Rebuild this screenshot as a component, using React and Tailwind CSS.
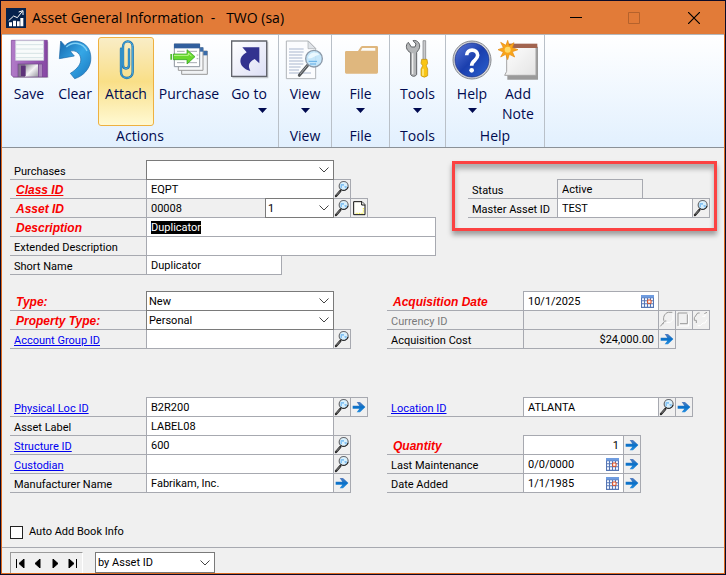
import React, { useEffect, useRef } from 'react'

const LINE = 'border-[#a7a9b0]'

function Magnifier() {
  return (
    <svg viewBox="0 0 48 54" className="w-4 h-[18px]">
      <path d="M19 33L6 48" stroke="#222" strokeWidth="7" strokeLinecap="round" />
      <path d="M18 34L7 46" stroke="#aaa" strokeWidth="2.5" />
      <circle cx="29" cy="18" r="13.5" fill="#d9f0fc" stroke="#66686c" strokeWidth="3.5" />
      <path d="M20 12h10v5h-6v8h-5zM31 18h7v7h-5z" fill="#86c4f4" />
      <path d="M19 27a13.500 13.500 0 0 0 23-6" fill="none" stroke="#222" strokeWidth="3" />
    </svg>
  )
}

function BlueArrow() {
  return (
    <svg viewBox="0 0 48 54" className="w-4 h-[18px]">
      <defs>
        <linearGradient id="blueArrow" x1="0" y1="0" x2="0" y2="1">
          <stop offset="0" stopColor="#5a7fc0" />
          <stop offset="0.500" stopColor="#0870c8" />
          <stop offset="1" stopColor="#2b90e0" />
        </linearGradient>
      </defs>
      <path d="M5 23h20l-8-11h10l16 15-16 16H17l8-11H5z" fill="url(#blueArrow)" />
    </svg>
  )
}

function NoteIcon() {
  return (
    <svg viewBox="0 0 48 54" className="w-4 h-[18px]">
      <path d="M8 8h25l9 9v30H8z" fill="#fffffa" stroke="#111" strokeWidth="3" />
      <path d="M32 8v10h10" fill="#fff" stroke="#111" strokeWidth="3" />
      <path d="M14 43h24M37 27v14" stroke="#f5ee30" strokeWidth="3" strokeDasharray="3 2" />
    </svg>
  )
}

function CalendarIcon() {
  return (
    <svg viewBox="0 0 39 39" className="size-[13px] shrink-0">
      <path d="M0 0h39v39H0z" fill="#5676b4" />
      <path d="M0 0h39v8H0z" fill="#6f9ce0" />
      <path d="M3 10h6v6H3zM12 10h6v6h-6zM21 10h6v6h-6zM30 10h6v6h-6zM3 19h6v6H3zM12 19h6v6h-6zM30 19h6v6h-6zM3 28h6v7H3zM12 28h6v7h-6zM21 28h6v7h-6zM30 28h6v7h-6z" fill="#f2f7ff" />
      <path d="M20 15h10v10H20z" fill="#fff" stroke="#e04a18" strokeWidth="3" />
    </svg>
  )
}

function GhostIcon({ kind }) {
  const d = {
    lookup: 'M4 46L16 32C10 22 16 6 28 4h12M10 38h4M18 30h4',
    note: 'M6 6h28M6 6v39M12 38h22V10',
    expand: 'M4 20L14 6h6M4 20v8h6v8M34 8l8-4',
  }[kind]
  const hi = {
    lookup: 'M22 34h12l8-8V8',
    note: 'M38 8v37H8',
    expand: 'M14 44h8l8-8h6l6-10M28 16h8v-8',
  }[kind]
  return (
    <svg viewBox="0 0 48 54" className="w-4 h-[18px]" fill="none" strokeWidth="3">
      <path d={hi} stroke="#fff" />
      <path d={d} stroke="#9a9a9a" />
    </svg>
  )
}

const ICONS = {
  lookup: ['Lookup', <Magnifier />],
  go: ['Open', <BlueArrow />],
  note: ['Note', <NoteIcon />],
  lookupOff: ['Lookup currency', <GhostIcon kind="lookup" />],
  noteOff: ['Currency note', <GhostIcon kind="note" />],
  expandOff: ['Currency expansion', <GhostIcon kind="expand" />],
}

function Cell({ icon }) {
  const [name, drawing] = ICONS[icon]
  return (
    <button
      type="button"
      aria-label={name}
      disabled={icon.endsWith('Off')}
      className={`w-[17px] h-5 -mt-px shrink-0 border border-l-0 ${LINE}`}
    >
      {drawing}
    </button>
  )
}

function Row({ id, label, kind, labelWidth = 'w-[136px]', cells = [], children }) {
  const text = {
    link: 'pl-1 text-[#0000f0]',
    required: "pl-1.5 text-[#f80000] font-['Liberation_Sans',sans-serif] text-[12px] font-bold italic",
    off: 'pl-1 text-[#7a7a7a]',
  }[kind] || 'pl-1'
  return (
    <div className="flex h-[19px]">
      <label htmlFor={id} className={`${labelWidth} shrink-0 border-b pt-[3px] leading-[15px] whitespace-nowrap ${LINE} ${text}`}>
        {kind === 'link' || id === 'class-id' ? <a href="#" className="underline">{label}</a> : label}
      </label>
      {children}
      {cells.map((c) => <Cell key={c} icon={c} />)}
    </div>
  )
}

function Field({ id, value = '', width = 'w-[188px]', gray, right, calendar, inputRef, noRight }) {
  return (
    <div className={`${width} ${gray ? 'bg-[#f0f0f0]' : 'bg-white'} ${noRight ? 'border-r-0' : ''} h-5 -mt-px shrink-0 flex items-center border px-1 ${LINE}`}>
      <input
        ref={inputRef}
        id={id}
        type="text"
        defaultValue={value}
        readOnly={gray}
        className={`w-full min-w-0 h-[13px] outline-none leading-[13px] selection:bg-[#000000fe] selection:text-white ${right ? 'text-right' : ''}`}
      />
      {calendar && <button type="button" aria-label="Calendar">{<CalendarIcon />}</button>}
    </div>
  )
}

function Select({ id, options, width = 'w-[188px]', height = 'h-5 -mt-px', label }) {
  return (
    <div className={`${width} ${height} relative z-10 shrink-0 grid items-center bg-white border border-[#7a7a7a]`}>
      <select id={id} aria-label={label} className="col-start-1 row-start-1 w-full h-[18px] pl-0.5 pt-px leading-4 appearance-none outline-none">
        {options.map((o) => <option key={o}>{o}</option>)}
      </select>
      <svg viewBox="0 0 10 6" className="col-start-1 row-start-1 justify-self-end mr-1 w-2.5 h-1.5 pointer-events-none" fill="none" stroke="#444">
        <path d="M0.500 0.500L5 5L9.500 0.500" />
      </svg>
    </div>
  )
}

function SaveIcon() {
  return (
    <svg viewBox="27 120 114 114" className="size-[38px] overflow-visible">
      <defs>
        <linearGradient id="purple" x1="0" y1="0" x2="1" y2="0">
          <stop offset="0" stopColor="#b17bc8" />
          <stop offset="1" stopColor="#8747a4" />
        </linearGradient>
        <linearGradient id="shutter" x1="0" y1="0" x2="1" y2="1">
          <stop offset="0" stopColor="#8c8c94" />
          <stop offset="0.500" stopColor="#f4f4f6" />
          <stop offset="1" stopColor="#9a9aa2" />
        </linearGradient>
      </defs>
      <path d="M34 125h108v109H36z" fill="#000" opacity="0.200" />
      <path d="M31 121h108v110H37l-6-6z" fill="url(#purple)" stroke="#75408f" strokeWidth="2" />
      <path d="M44 122h84v59H44z" fill="#f8fbfb" stroke="#cfd8dc" strokeWidth="2" />
      <path d="M45 134h82M45 147h82M45 160h82M45 173h82" stroke="#d5e2e4" strokeWidth="3" />
      <path d="M50 191h74v40H50z" fill="#6b4585" />
      <path d="M72 193h39v37H72z" fill="url(#shutter)" />
      <path d="M52 193h20v37H52z" fill="#85758f" />
      <path d="M60 197h14v31H60z" fill="#5c3279" />
      <path d="M113 193h10v37h-10z" fill="#a985bb" />
    </svg>
  )
}

function ClearIcon() {
  return (
    <svg viewBox="165 120 114 114" className="size-[38px] overflow-visible">
      <defs>
        <linearGradient id="undo" x1="0" y1="0" x2="1" y2="1">
          <stop offset="0" stopColor="#1668ae" />
          <stop offset="0.500" stopColor="#35a7e6" />
          <stop offset="1" stopColor="#1b78c0" />
        </linearGradient>
      </defs>
      <path
        d="M179 123L192 137C204 124 222 120 238 126C262 134 272 157 269 183C266 207 246 229 221 236L208 220C229 207 242 191 239 174C236 157 220 149 208 154L220 168L175 176z"
        fill="url(#undo)"
        stroke="#1966a6"
        strokeWidth="2"
      />
      <path d="M196 141C215 123 246 127 258 153" fill="none" stroke="#7fd0f6" strokeWidth="4" />
    </svg>
  )
}

function AttachIcon() {
  return (
    <svg viewBox="321 120 114 114" className="size-[38px] overflow-visible" fill="none" strokeLinecap="round">
      <path d="M363 146v70c0 24 35 24 35 0v-76c0-21-29-21-29 0v55c0 14 18 14 18 0v-47" stroke="#1c6ea8" strokeWidth="7" />
      <path d="M363 146v70c0 24 35 24 35 0v-76c0-21-29-21-29 0v55c0 14 18 14 18 0v-47" stroke="#4bb0e4" strokeWidth="3" />
    </svg>
  )
}

function PurchaseIcon() {
  return (
    <svg viewBox="507 120 114 114" className="size-[38px] overflow-visible">
      <path d="M542 153h77v70h-77z" fill="#f0f2f4" stroke="#999" strokeWidth="3" />
      <path d="M541 153h78v13h-78z" fill="#3a6caa" />
      <path d="M532 143h74v68h-74z" fill="#f7f8f9" stroke="#999" strokeWidth="3" />
      <path d="M531 142h76v13h-76z" fill="#3a6caa" />
      <path d="M520 132h76v68h-76z" fill="#fff" stroke="#8d959e" strokeWidth="3" />
      <path d="M519 131h78v14h-78z" fill="#315f9d" />
      <path d="M528 154h23M560 154h28M528 188h23M560 188h28M587 165h5M587 176h5" stroke="#a8acb2" strokeWidth="3" />
      <path d="M517 162h41v-13l24 21-24 22v-13h-41z" fill="#68d92e" stroke="#279a1d" strokeWidth="2" />
      <path d="M508 162h5v17h-5z" fill="#4dbb2c" />
      <path d="M519 166h43v-7l10 10" fill="none" stroke="#bff796" strokeWidth="3" />
    </svg>
  )
}

function GotoIcon() {
  return (
    <svg viewBox="687 120 114 114" className="size-[38px] overflow-visible">
      <defs>
        <linearGradient id="goto" x1="0" y1="0" x2="1" y2="1">
          <stop offset="0" stopColor="#fff" />
          <stop offset="1" stopColor="#dcdff5" />
        </linearGradient>
      </defs>
      <path d="M694 125h108v110H694z" fill="#000" opacity="0.200" />
      <path d="M692 123h105v106H692z" fill="url(#goto)" stroke="#62646c" strokeWidth="4" />
      <path d="M724 142h51v48l-14-13c-18 9-21 20-13 36-31-8-43-38-11-56z" fill="#33338f" />
    </svg>
  )
}

function ViewIcon() {
  return (
    <svg viewBox="48 120 114 114" className="size-[38px] overflow-visible">
      <path d="M49 123h66l22 22v91H49z" fill="#fbfcfe" stroke="#b0b4b8" strokeWidth="3" />
      <path d="M114 123l23 23h-23z" fill="#dfe3e8" stroke="#a8acb0" strokeWidth="2" />
      <path d="M57 147h44M57 156h44M57 165h40M57 174h40M57 183h43M57 192h43M57 201h35M57 210h30M57 219h66" stroke="#a9b6ce" strokeWidth="3" />
      <path d="M113 196L88 226" stroke="#55585c" strokeWidth="9" strokeLinecap="round" />
      <path d="M112 196L90 222" stroke="#a4a8ac" strokeWidth="3" />
      <circle cx="132" cy="176" r="25" fill="#bfe3fa" fillOpacity="0.900" stroke="#8c99a8" strokeWidth="4" />
      <path d="M114 175c3-18 25-23 34-10-10-1-20 12-34 10z" fill="#eaf8ff" />
      <path d="M116 184h25M120 192h18" stroke="#5fabe5" strokeWidth="3" />
    </svg>
  )
}

function FileIcon() {
  return (
    <svg viewBox="214 120 114 114" className="size-[38px] overflow-visible">
      <path d="M223 157q0-4 4-4h35l8-12q2-3 6-3h42q4 0 4 4v75q0 4-4 4h-91q-4 0-4-4z" fill="#dfb77e" />
      <path d="M270 152l5-8h39v8z" fill="#fbfbf8" />
    </svg>
  )
}

function ToolsIcon() {
  return (
    <svg viewBox="385 120 114 114" className="size-[38px] overflow-visible">
      <path d="M413 127l9 14h11l3-9-9-10c14-4 26 12 17 27l-6 8v67q-9 10-18 0v-66c-14-6-17-23-7-31z" fill="#b4b6b8" stroke="#5f6265" strokeWidth="3" />
      <path d="M426 160v62" stroke="#eee" strokeWidth="4" />
      <path d="M457 122h8v57h-8z" fill="#c9cacc" stroke="#77797c" strokeWidth="2" />
      <path d="M453 178h16l2 12-4 7 4 10v20q-10 9-20 0v-20l5-10-5-7z" fill="#f9c514" stroke="#b98a0c" strokeWidth="2" />
      <path d="M457 206v21" stroke="#fff09a" strokeWidth="4" />
    </svg>
  )
}

function HelpIcon() {
  return (
    <svg viewBox="549 120 114 114" className="size-[38px] overflow-visible">
      <defs>
        <linearGradient id="help" x1="0" y1="0" x2="1" y2="1">
          <stop offset="0" stopColor="#5b79d8" />
          <stop offset="0.500" stopColor="#1b3fae" />
          <stop offset="1" stopColor="#2a62d0" />
        </linearGradient>
      </defs>
      <circle cx="606" cy="180" r="57" fill="#d4d6da" stroke="#85888e" strokeWidth="3" />
      <circle cx="606" cy="180" r="51" fill="url(#help)" stroke="#1c2f80" strokeWidth="2" />
      <path d="M590 166c0-22 33-20 33 0 0 15-18 15-18 31" fill="none" stroke="#fff" strokeWidth="11" />
      <circle cx="605" cy="211" r="7" fill="#fff" />
    </svg>
  )
}

function AddNoteIcon() {
  return (
    <svg viewBox="687 120 114 114" className="size-[38px] overflow-visible">
      <defs>
        <linearGradient id="paper" x1="0" y1="0" x2="1" y2="1">
          <stop offset="0" stopColor="#fff" />
          <stop offset="1" stopColor="#e4e4e4" />
        </linearGradient>
      </defs>
      <path d="M712 140h92v99h-92z" fill="#9a9a9a" />
      <path d="M710 134h88v92h-94l6-12z" fill="url(#paper)" stroke="#a5a5a5" strokeWidth="3" />
      <path d="M709 131h93v13h-93z" fill="#a1644f" />
      <path d="M713 121l5 16 14-9-5 15 17 6-17 6 7 16-16-8-5 16-6-16-15 8 8-15-16-7 16-6-8-16 16 9z" fill="#f9a51a" stroke="#e58b10" strokeWidth="2" />
      <circle cx="713" cy="149" r="9" fill="#ffd966" />
    </svg>
  )
}

function RibbonButton({ icon, label, width, menu, menuEnd, active }) {
  return (
    <button
      type="button"
      className={`${width} h-[89px] pt-0.5 flex flex-col items-center border rounded-[3px] ${active ? 'border-[#eeb140] bg-linear-to-b from-[#f9edc6] via-[#f9df87] via-50% to-[#fff9d2]' : 'border-transparent'}`}
    >
      {icon}
      <span className="mt-1.5 leading-5">{label}</span>
      {menu && (
        <svg viewBox="0 0 9 5" className={`w-[9px] h-[5px] mt-1 ${menuEnd ? 'self-end mr-1.5' : ''}`}>
          <path d="M0 0h9L4.500 5z" fill="#000a50" />
        </svg>
      )}
    </button>
  )
}

function RibbonGroup({ title, width, children }) {
  return (
    <div className={`${width} shrink-0 pt-0.5 flex flex-col items-center border-r border-[#b9c0c8]`}>
      <div className="flex">{children}</div>
      <span className="leading-5">{title}</span>
    </div>
  )
}

function Ribbon() {
  return (
    <div className="flex h-[114px] border-t border-t-[#b4b8bc] border-b border-b-[#8b9197] bg-linear-to-b from-white to-[#e2f0fe] font-['Open_Sans',sans-serif] text-[14px] text-[#000a50]">
      <RibbonGroup title="Actions" width="w-[277px]">
        <RibbonButton icon={<SaveIcon />} label="Save" width="w-[46px]" />
        <RibbonButton icon={<ClearIcon />} label="Clear" width="w-[46px]" />
        <RibbonButton icon={<AttachIcon />} label="Attach" width="w-14" active />
        <RibbonButton icon={<PurchaseIcon />} label="Purchase" width="w-[70px]" />
        <RibbonButton icon={<GotoIcon />} label="Go to" width="w-[50px]" menu menuEnd />
      </RibbonGroup>
      <RibbonGroup title="View" width="w-[53px]">
        <RibbonButton icon={<ViewIcon />} label="View" width="w-[50px]" menu />
      </RibbonGroup>
      <RibbonGroup title="File" width="w-[58px]">
        <RibbonButton icon={<FileIcon />} label="File" width="w-[50px]" menu />
      </RibbonGroup>
      <RibbonGroup title="Tools" width="w-14">
        <RibbonButton icon={<ToolsIcon />} label="Tools" width="w-[50px]" menu />
      </RibbonGroup>
      <RibbonGroup title="Help" width="w-[99px]">
        <RibbonButton icon={<HelpIcon />} label="Help" width="w-[46px]" menu />
        <RibbonButton icon={<AddNoteIcon />} label="Add Note" width="w-[46px]" />
      </RibbonGroup>
    </div>
  )
}

function TitleBar() {
  return (
    <header className="flex items-center h-[33px] pl-[5px] bg-[#e27b38] font-['Open_Sans',sans-serif] text-[14px] text-black">
      <svg viewBox="0 0 60 60" className="size-5">
        <path d="M0 0h60v60H0z" fill="#06224c" />
        <path d="M9 43h9v12H9zM21 38h9v17h-9zM33 40h8v15h-8zM43 30h9v25h-9z" fill="#fff" />
        <path d="M8 38l15-14 11 5 15-19M38 12l13-4v13" fill="none" stroke="#fff" strokeWidth="3" />
      </svg>
      <h1 className="ml-1.5 flex-1 whitespace-pre">{'Asset General Information  -   TWO (sa)'}</h1>
      <div className="flex">
        <button type="button" aria-label="Minimize" className="w-[58px] h-8 grid place-items-center">
          <svg viewBox="0 0 12 12" className="size-3" stroke="#000"><path d="M0 5.500h12" /></svg>
        </button>
        <button type="button" aria-label="Maximize" disabled className="w-[58px] h-8 grid place-items-center">
          <svg viewBox="0 0 12 12" className="size-3" fill="none" stroke="#b5622c"><path d="M0.500 0.500h11v11H0.500z" /></svg>
        </button>
        <button type="button" aria-label="Close" className="w-[62px] h-8 grid place-items-center">
          <svg viewBox="0 0 12 12" className="size-3" stroke="#000" strokeWidth="1.200"><path d="M0 0l12 12M12 0L0 12" /></svg>
        </button>
      </div>
    </header>
  )
}

const NAV = [
  ['First record', 'M1.500 0v9M9 0v9L4 4.500z'],
  ['Previous record', 'M7 0v9L2 4.500z'],
  ['Next record', 'M3 0v9l5-4.500z'],
  ['Last record', 'M1 0v9l5-4.500zM8.500 0v9'],
]

function App() {
  const description = useRef(null)

  useEffect(() => {
    description.current.focus()
    description.current.select()
  }, [])

  return (
    <div className="min-h-screen flex flex-col border border-[#0c0a28] bg-[#f0f0f0] font-[Roboto,sans-serif] text-[11px] text-black">
      <TitleBar />
      <div className="flex-1 flex flex-col border border-t-0 border-[#dc6a20]">
        <Ribbon />
        <main className="flex-1 pl-2 pt-[13px] pb-2">
          <div className="flex gap-4">
            <div className="w-[426px] shrink-0">
              <Row id="purchases" label="Purchases">
                <Select id="purchases" options={['']} />
              </Row>
              <Row id="class-id" label="Class ID" kind="required" cells={['lookup']}>
                <Field id="class-id" value="EQPT" />
              </Row>
              <Row id="asset-id" label="Asset ID" kind="required" cells={['lookup', 'note']}>
                <Field id="asset-id" value="00008" width="w-[119px]" gray noRight />
                <Select label="Asset suffix" options={['1']} width="w-[69px]" />
              </Row>
              <Row id="description" label="Description" kind="required">
                <Field id="description" value="Duplicator" width="w-[290px]" inputRef={description} />
              </Row>
              <Row id="ext-description" label="Extended Description">
                <Field id="ext-description" width="w-[290px]" />
              </Row>
              <Row id="short-name" label="Short Name">
                <Field id="short-name" value="Duplicator" width="w-[136px]" />
              </Row>
            </div>
            <div className="w-[265px] h-[70px] shrink-0 pt-4 pl-[13px] border-3 border-[#fb4242] shadow-[0_4px_5px_rgba(0,0,0,0.35),inset_0_5px_5px_rgba(0,0,0,0.28)]">
              <Row id="status" label="Status" labelWidth="w-[89px]">
                <Field id="status" value="Active" width="w-[86px]" gray />
              </Row>
              <Row id="master-id" label="Master Asset ID" labelWidth="w-[89px]" cells={['lookup']}>
                <Field id="master-id" value="TEST" width="w-[136px]" />
              </Row>
            </div>
          </div>

          <div className="mt-[17px] grid grid-cols-[377px_1fr]">
            <div>
              <Row id="type" label="Type:" kind="required">
                <Select id="type" options={['New', 'Used']} />
              </Row>
              <Row id="property-type" label="Property Type:" kind="required">
                <Select id="property-type" options={['Personal', 'Real']} />
              </Row>
              <Row id="account-group" label="Account Group ID" kind="link" cells={['lookup']}>
                <Field id="account-group" />
              </Row>
            </div>
            <div>
              <Row id="acq-date" label="Acquisition Date" kind="required">
                <Field id="acq-date" value="10/1/2025" width="w-[136px]" calendar />
              </Row>
              <Row id="currency" label="Currency ID" kind="off" cells={['lookupOff', 'noteOff', 'expandOff']}>
                <Field id="currency" width="w-[136px]" gray />
              </Row>
              <Row id="acq-cost" label="Acquisition Cost" cells={['go']}>
                <Field id="acq-cost" value="$24,000.00" width="w-[136px]" gray right />
              </Row>
            </div>
          </div>

          <div className="mt-[49px] grid grid-cols-[377px_1fr]">
            <div>
              <Row id="physical-loc" label="Physical Loc ID" kind="link" cells={['lookup', 'go']}>
                <Field id="physical-loc" value="B2R200" />
              </Row>
              <Row id="asset-label" label="Asset Label">
                <Field id="asset-label" value="LABEL08" />
              </Row>
              <Row id="structure" label="Structure ID" kind="link" cells={['lookup']}>
                <Field id="structure" value="600" />
              </Row>
              <Row id="custodian" label="Custodian" kind="link" cells={['lookup']}>
                <Field id="custodian" />
              </Row>
              <Row id="manufacturer" label="Manufacturer Name" cells={['go']}>
                <Field id="manufacturer" value="Fabrikam, Inc." />
              </Row>
            </div>
            <div>
              <Row id="location" label="Location ID" kind="link" cells={['lookup', 'go']}>
                <Field id="location" value="ATLANTA" width="w-[136px]" />
              </Row>
              <div className="h-[19px]" />
              <Row id="quantity" label="Quantity" kind="required" cells={['go']}>
                <Field id="quantity" value="1" width="w-[101px]" right />
              </Row>
              <Row id="last-maint" label="Last Maintenance" cells={['go']}>
                <Field id="last-maint" value="0/0/0000" width="w-[101px]" calendar />
              </Row>
              <Row id="date-added" label="Date Added" cells={['go']}>
                <Field id="date-added" value="1/1/1985" width="w-[101px]" calendar />
              </Row>
            </div>
          </div>

          <label className="mt-8 h-3.5 flex items-center gap-1.5">
            <input type="checkbox" className="appearance-none size-[13px] bg-white border border-[#222]" />
            Auto Add Book Info
          </label>
        </main>

        <footer className={`flex gap-3 pl-2 pt-1 border-t ${LINE}`}>
          <div className="flex w-[73px] h-[21px] border-t border-l border-t-[#9a9a9a] border-l-[#9a9a9a] border-r border-r-white">
            {NAV.map(([name, d]) => (
              <button key={name} type="button" aria-label={name} className="flex-1 grid place-items-center">
                <svg viewBox="0 0 10 9" className="w-2.5 h-[9px]" stroke="#000" strokeWidth="1"><path d={d} /></svg>
              </button>
            ))}
          </div>
          <Select label="Sort order" options={['by Asset ID', 'by Class ID']} width="w-[120px]" height="h-[21px]" />
        </footer>
      </div>
    </div>
  )
}

export default App
